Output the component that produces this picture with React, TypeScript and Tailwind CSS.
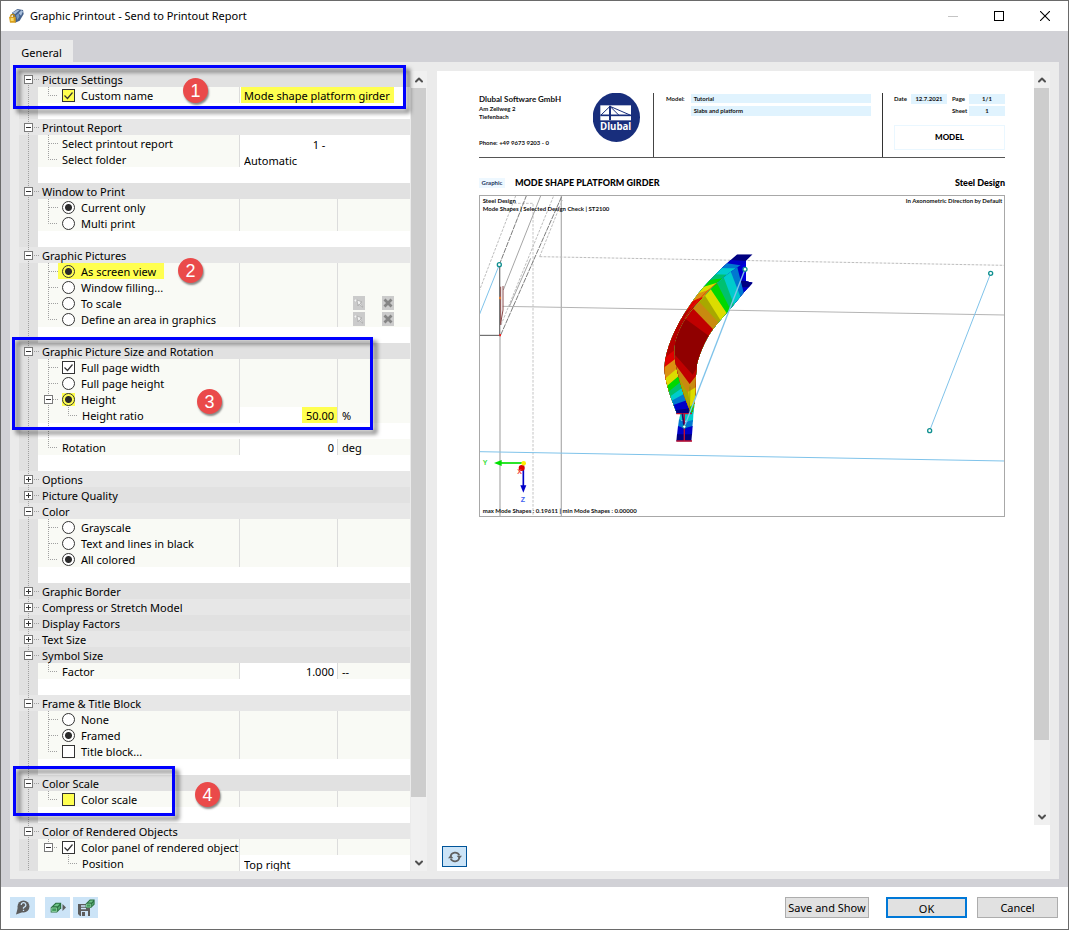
import React from 'react';
import { ChevronDown, ChevronUp } from 'lucide-react';

type Row = {
  label?: string;
  control?: 'checkbox' | 'radio';
  checked?: boolean;
  mark?: 'row' | 'control';
  nested?: boolean;
  expander?: boolean;
  last?: boolean;
  value?: string;
  kind?: 'input' | 'select';
  align?: 'left' | 'right' | 'center';
  markValue?: boolean;
  unit?: string;
  wide?: boolean;
  tools?: boolean;
  gap?: 'plain' | 'line';
};

type Section = { title: string; open?: boolean; rows: Row[] };

const sections: Section[] = [
  {
    title: 'Picture Settings',
    open: true,
    rows: [
      { label: 'Custom name', control: 'checkbox', checked: true, mark: 'control', last: true, kind: 'input', value: 'Mode shape platform girder', wide: true, markValue: true },
      { gap: 'plain' },
    ],
  },
  {
    title: 'Printout Report',
    open: true,
    rows: [
      { label: 'Select printout report', kind: 'select', value: '1 -', align: 'center', wide: true },
      { label: 'Select folder', last: true, kind: 'select', value: 'Automatic', wide: true },
      { gap: 'plain' },
    ],
  },
  {
    title: 'Window to Print',
    open: true,
    rows: [
      { label: 'Current only', control: 'radio', checked: true },
      { label: 'Multi print', control: 'radio', last: true },
      { gap: 'plain' },
    ],
  },
  {
    title: 'Graphic Pictures',
    open: true,
    rows: [
      { label: 'As screen view', control: 'radio', checked: true, mark: 'row' },
      { label: 'Window filling...', control: 'radio' },
      { label: 'To scale', control: 'radio', tools: true },
      { label: 'Define an area in graphics', control: 'radio', tools: true, last: true },
      { gap: 'plain' },
    ],
  },
  {
    title: 'Graphic Picture Size and Rotation',
    open: true,
    rows: [
      { label: 'Full page width', control: 'checkbox', checked: true },
      { label: 'Full page height', control: 'radio' },
      { label: 'Height', control: 'radio', checked: true, mark: 'control', expander: true },
      { label: 'Height ratio', nested: true, kind: 'input', value: '50.00', align: 'right', markValue: true, unit: '%' },
      { gap: 'line' },
      { label: 'Rotation', last: true, kind: 'input', value: '0', align: 'right', unit: 'deg' },
      { gap: 'plain' },
    ],
  },
  { title: 'Options', rows: [] },
  { title: 'Picture Quality', rows: [] },
  {
    title: 'Color',
    open: true,
    rows: [
      { label: 'Grayscale', control: 'radio' },
      { label: 'Text and lines in black', control: 'radio' },
      { label: 'All colored', control: 'radio', checked: true, last: true },
      { gap: 'plain' },
    ],
  },
  { title: 'Graphic Border', rows: [] },
  { title: 'Compress or Stretch Model', rows: [] },
  { title: 'Display Factors', rows: [] },
  { title: 'Text Size', rows: [] },
  {
    title: 'Symbol Size',
    open: true,
    rows: [
      { label: 'Factor', last: true, kind: 'input', value: '1.000', align: 'right', unit: '--' },
      { gap: 'plain' },
    ],
  },
  {
    title: 'Frame & Title Block',
    open: true,
    rows: [
      { label: 'None', control: 'radio' },
      { label: 'Framed', control: 'radio', checked: true },
      { label: 'Title block...', control: 'checkbox', last: true },
      { gap: 'plain' },
    ],
  },
  {
    title: 'Color Scale',
    open: true,
    rows: [
      { label: 'Color scale', control: 'checkbox', mark: 'control', last: true },
      { gap: 'plain' },
    ],
  },
  {
    title: 'Color of Rendered Objects',
    open: true,
    rows: [
      { label: 'Color panel of rendered object', control: 'checkbox', checked: true, expander: true, last: true },
      { label: 'Position', nested: true, last: true, kind: 'select', value: 'Top right', wide: true },
    ],
  },
];

const Dots = ({ d }: { d: string }) => (
  <path d={d} stroke="#a0a0a0" strokeDasharray="1 1" fill="none" />
);

const ExpanderBox = ({ x, open }: { x: number; open?: boolean }) => (
  <g>
    <rect x={x + 0.5} y="4.5" width="8" height="8" fill="#fff" stroke="#7a7a7a" />
    <path d={`M${x + 2} 8.5h5`} stroke="#333" />
    {!open && <path d={`M${x + 4.5} 6v5`} stroke="#333" />}
  </g>
);

const CheckInput = ({ row, id, group }: { row: Row; id: string; group: string }) => (
  <span className={`relative flex shrink-0 ${row.mark === 'control' && row.control === 'radio' ? 'bg-[#ffff50]' : ''}`}>
    {row.control === 'radio' ? (
      <input
        id={id}
        type="radio"
        name={group}
        defaultChecked={row.checked}
        className={`size-[13px] appearance-none rounded-full border border-[#333] checked:bg-[radial-gradient(circle,#2b2b2b_0_3px,transparent_4px)] ${row.mark ? 'bg-[#ffff50]' : 'bg-white'}`}
      />
    ) : (
      <input
        id={id}
        type="checkbox"
        defaultChecked={row.checked}
        className={`peer size-[13px] appearance-none border border-[#333] ${row.mark ? 'bg-[#ffff50]' : 'bg-white'}`}
      />
    )}
    {row.control === 'checkbox' && (
      <svg viewBox="0 0 13 13" className="pointer-events-none absolute inset-0 hidden size-[13px] peer-checked:block">
        <path d="M2.5 6.5l3 3 5-6" fill="none" stroke="#333" strokeWidth="1.2" />
      </svg>
    )}
  </span>
);

const Tools = ({ label }: { label: string }) => (
  <div className="flex gap-[17px] pl-[15px]">
    <button aria-label={`Pick: ${label}`} className="h-[14px] w-3 bg-[#cbcbcb]">
      <svg viewBox="0 0 12 14" className="block">
        <path d="M1.5 4.5h2M2.500 3.500v2" stroke="#f4f4f4" fill="none" />
        <path d="M4 4l5 2-2 1 3 4h-1L6 8 5 10z" fill="#f1f1f1" stroke="#a0a0a0" strokeWidth="0.6" />
      </svg>
    </button>
    <button aria-label={`Clear: ${label}`} className="h-[14px] w-3 bg-[#cbcbcb]">
      <svg viewBox="0 0 12 14" className="block">
        <path d="M2.5 3.500l7 7M9.500 3.500l-7 7" stroke="#858585" strokeWidth="2.800" />
      </svg>
    </button>
  </div>
);

const alignClass = { left: 'text-left', right: 'text-right', center: 'text-center' };

const TreeRow = ({ row, id, group, end }: { row: Row; id: string; group: string; end: boolean }) => {
  const gutter = (
    <svg className="h-4 w-[19px] shrink-0 bg-[#e1e1e1]" viewBox="0 0 19 16">
      <Dots d="M9.500 0v16" />
    </svg>
  );

  if (row.gap) {
    return (
      <div className="flex h-4 bg-white">
        {gutter}
        {row.gap === 'line' && (
          <svg className="h-4 w-5" viewBox="0 0 20 16"><Dots d="M10.500 0v16" /></svg>
        )}
      </div>
    );
  }

  const guide = row.nested ? (
    <svg className="h-4 w-10 shrink-0" viewBox="0 0 40 16">
      {!end && <Dots d="M10.500 0v16" />}
      <Dots d="M30.500 0v8.500h10" />
    </svg>
  ) : (
    <svg className="h-4 w-5 shrink-0" viewBox="0 0 20 16">
      <Dots d={row.last ? 'M10.500 0v8.500h10' : 'M10.500 0v16'} />
      {!row.last && <Dots d="M11 8.500h9" />}
      {row.expander && <ExpanderBox x={6} open />}
    </svg>
  );

  const valueBg = row.value ? 'bg-white' : '';
  const valuePad = row.align === 'center' ? 'pl-1' : row.markValue ? 'pl-px' : '';
  const fieldPad = row.align === 'right' ? 'pr-[3px]' : row.markValue ? 'px-[3px]' : 'px-1';
  const fieldClass = `h-4 w-full appearance-none pt-0.5 outline-none ${fieldPad} ${alignClass[row.align ?? 'left']}`;

  return (
    <div className="flex h-4 bg-[#f9faf5]">
      {gutter}
      <div className="flex w-[202px] shrink-0 overflow-hidden border-r border-[#dcdcdc]">
        {row.expander ? <button aria-label={`Collapse ${row.label}`}>{guide}</button> : guide}
        <label
          htmlFor={id}
          className={`flex items-center gap-[6px] px-1 whitespace-nowrap ${row.mark === 'row' ? 'bg-[#ffff50] pr-2' : ''}`}
        >
          {row.control && <CheckInput row={row} id={id} group={group} />}
          <span className="pt-0.5">{row.label}</span>
        </label>
      </div>
      <div className={`flex ${row.wide ? 'flex-1 pr-4' : 'w-[98px] justify-end border-r border-[#dcdcdc]'} ${valueBg} ${valuePad}`}>
        {row.kind === 'input' && (
          <input
            id={id}
            aria-label={row.label}
            defaultValue={row.value}
            className={`${fieldClass} ${row.markValue ? 'bg-[#ffff50]' : ''} ${row.markValue && !row.wide ? 'max-w-[35px]' : ''}`}
          />
        )}
        {row.kind === 'select' && (
          <select id={id} className={fieldClass}>
            <option>{row.value}</option>
          </select>
        )}
      </div>
      {!row.wide && (
        <div className="flex flex-1 items-center">
          {row.unit && <span className="pt-0.5 pl-1">{row.unit}</span>}
          {row.tools && <Tools label={row.label ?? ''} />}
        </div>
      )}
    </div>
  );
};

const SettingsTree = () => (
  <div className="w-[391px] bg-white text-[11px] leading-4">
    {sections.map((section, i) => (
      <div key={section.title}>
        <div className={`flex h-4 ${i % 2 ? 'bg-[#e7e7e7]' : 'bg-[#e1e1e1]'}`}>
          <button aria-label={`Toggle ${section.title}`} className="w-[23px] shrink-0">
            <svg className="block h-4 w-[23px]" viewBox="0 0 23 16">
              <Dots d={i === 0 ? 'M9.500 8v8' : 'M9.500 0v16'} />
              <Dots d="M15 8.500h6" />
              <ExpanderBox x={5} open={section.open} />
            </svg>
          </button>
          <span className="leading-[18px]">{section.title}</span>
        </div>
        {section.rows.map((row, j) => (
          <TreeRow
            key={j}
            row={row}
            id={`opt-${i}-${j}`}
            group={`group-${i}`}
            end={j === section.rows.length - 1}
          />
        ))}
      </div>
    ))}
  </div>
);

const ScrollBar = ({ thumb }: { thumb: string }) => (
  <div className="flex w-4 shrink-0 flex-col bg-[#f0f0f0]">
    <button aria-label="Scroll up" className="flex h-[17px] items-center justify-center text-[#505050]">
      <ChevronUp size={12} strokeWidth={4} />
    </button>
    <div className={`w-[15px] bg-[#cdcdcd] ${thumb}`} />
    <div className="flex-1" />
    <button aria-label="Scroll down" className="flex h-[17px] items-center justify-center text-[#505050]">
      <ChevronDown size={12} strokeWidth={4} />
    </button>
  </div>
);

// Each band fills everything below the line x1,y1 - x2,y2; later bands cover earlier ones
type Band = [string, number, number, number, number];

const flangeBands: Band[] = [
  ['#0000c8', 274, 60, 318, 63],
  ['#0078d0', 262, 70, 304, 76],
  ['#00cccc', 244, 84, 292, 85],
  ['#00c070', 225, 103, 262, 104],
  ['#00d800', 207, 120, 240, 116],
  ['#dcdc00', 192, 140, 226, 130],
  ['#dc9010', 176, 160, 204, 150],
  ['#e00000', 156, 184, 180, 174],
  ['#b40000', 140, 212, 160, 200],
  ['#e00000', 76, 352, 104, 330],
  ['#dc9010', 73, 382, 104, 358],
  ['#dcdc00', 77, 414, 108, 388],
  ['#00d800', 81, 438, 114, 410],
  ['#00c070', 87, 454, 119, 428],
  ['#00cccc', 92, 468, 126, 444],
  ['#0078d0', 97, 481, 132, 462],
  ['#0000c8', 102, 494, 140, 481],
  ['#000080', 109, 510, 152, 505],
];

const webBands: Band[] = [
  ['#0078d0', 292, 82, 308, 146],
  ['#00cccc', 273, 97, 298, 162],
  ['#00c070', 251, 112, 281, 192],
  ['#00d800', 231, 129, 270, 206],
  ['#dcdc00', 213, 149, 257, 215],
  ['#a8a800', 195, 167, 240, 238],
  ['#c88a10', 177, 185, 234, 246],
  ['#c00000', 159, 205, 216, 264],
  ['#900000', 136, 236, 204, 286],
];

const bandPoints = ([, x1, y1, x2, y2]: Band, reach: number) => {
  const dx = (x2 - x1) * reach;
  const dy = (y2 - y1) * reach;
  return `0,${y1 - dy} ${x1 - dx},${y1 - dy} ${x2 + dx},${y2 + dy} ${x2 + dx},620 0,620`;
};

const Girder = () => (
  <g transform="translate(483 135)">
    <clipPath id="girder-body">
      <path d="M292 43H338L318 62V124L338 128 312 157 270 208 236 246C200 287 180 335 171 372C166 410 168 450 164 485L155 521H111C95 480 75 430 73 385C75 330 105 260 150 195C180 150 230 95 292 43Z" />
    </clipPath>
    <clipPath id="girder-web">
      <path d="M318 66C285 84 230 125 195 167C150 212 122 250 106 305C100 345 106 370 116 410C126 450 140 490 155 521H400V66Z" />
    </clipPath>
    <polygon points="122,521 166,470 163,500 158,530 119,535" fill="#00d070" />
    <polygon points="121,521 161,506 159,545 117,540" fill="#00cccc" />
    <polygon points="117,538 133,546 159,540 157,562 133,566 114,560" fill="#0078d0" />
    <polygon points="114,558 133,565 158,558 156,585 111,585" fill="#0000c8" />
    <polygon points="111,583 156,583 154,604 109,604" fill="#000080" />
    <g clipPath="url(#girder-body)">
      <path d="M0 0h400v620H0z" fill="#000080" />
      {flangeBands.map((band, i) => (
        <polygon key={i} points={bandPoints(band, 0.3)} fill={band[0]} />
      ))}
      <g clipPath="url(#girder-web)">
        <path d="M0 0h400v620H0z" fill="#0000c8" />
        <path d="M318 66l-14 12 8 60 6 0z" fill="#0000e0" />
        <path d="M300 122h50v20h-45z" fill="#000080" />
        {webBands.map((band, i) => (
          <polygon key={i} points={bandPoints(band, 0.3)} fill={band[0]} />
        ))}
        <path d="M90 328L158 404 190 350V620H90z" fill="#c00000" />
        <path d="M90 352L149 432 190 380V620H90z" fill="#c88a10" />
        <path d="M110 400L146 464 149 432V520H110z" fill="#a8a800" />
        <path d="M145 455L190 428V520L150 500z" fill="#dcdc00" />
        <path d="M150 500L190 470V540H150z" fill="#00d800" />
      </g>
      <path d="M230 130C190 160 150 205 134 236" stroke="#c83c00" strokeWidth="2" fill="none" />
      <path d="M150 440L148 520" stroke="#8a8a00" strokeWidth="2" />
    </g>
    <path d="M109 521h46M109 603h47M133 521v82" stroke="#c01030" strokeWidth="4" />
    <path d="M127 521l5 35" stroke="#300060" strokeWidth="5" />
    <path d="M315 88L133 560" stroke="#7fc3ea" strokeWidth="4" />
    <circle cx="315" cy="88" r="6" fill="#fff" stroke="#109090" strokeWidth="4" />
    <circle cx="133" cy="560" r="5" fill="#fff" stroke="#109090" strokeWidth="3" />
  </g>
);

const GirderView = () => (
  <svg viewBox="0 0 1578 966" className="block w-full bg-white outline outline-[#a8a8a8] -outline-offset-1" role="img" aria-label="Mode shape of the platform girder">
    <g transform="translate(-27 -45)" fill="none" strokeWidth="3">
      <path d="M90 465V1011M274 45v966" stroke="#b4b4b4" strokeWidth="4" />
      <path d="M189 72V1011M120 70h70" stroke="#c4c4c4" strokeDasharray="8 4" />
      <path d="M98 379L1605 405" stroke="#b4b4b4" />
      <path d="M209 230L1605 256M209 230L277 60M27 335L138 45M93 435L252 45" stroke="#bdbdbd" strokeDasharray="8 4" />
      <path d="M88 254L170 45M92 465L277 45" stroke="#7c7c7c" strokeDasharray="16 3" />
      <path d="M100 330L213 45M118 380L182 235" stroke="#a5a5a5" />
      <path d="M27 466h64" stroke="#555" />
      <path d="M89 254V465" stroke="#777" strokeWidth="4" />
      <path d="M92 320v115M99 318v72l-7 40" stroke="#8a4a4a" />
      <path d="M90 350v8" stroke="#f08030" strokeWidth="5" />
      <path d="M88 462h5v7h-5z" fill="#e22" />
      <path d="M27 815L1605 843M27 407L88 254M1562 280L1379 752" stroke="#7fc3ea" />
      <g fill="#fff" stroke="#109090" strokeWidth="4">
        <circle cx="88" cy="254" r="6" />
        <circle cx="1562" cy="280" r="6" />
        <circle cx="1379" cy="752" r="6" />
      </g>
    </g>
    <Girder />
    <g transform="translate(-27 -45)">
      <path d="M90 849h70" stroke="#00e000" strokeWidth="5" />
      <path d="M72 849l23-9v18z" fill="#00e000" />
      <path d="M160 855v65" stroke="#0000c8" strokeWidth="5" />
      <path d="M160 938l-9-22h18z" fill="#0000c8" />
      <circle cx="155" cy="864" r="9" fill="#e00000" />
      <circle cx="161" cy="850" r="7" fill="#ffee00" />
      <g fontFamily="Liberation Sans, sans-serif" fontSize="21">
        <text x="38" y="855" fill="#40e040">Y</text>
        <text x="142" y="883" fill="#f04040">X</text>
        <text x="152" y="965" fill="#4060f0">Z</text>
      </g>
      <g fontFamily="Lato, sans-serif" fontSize="18" fontWeight="700" fill="#111">
        <text x="38" y="69">Steel Design</text>
        <text x="38" y="92">Mode Shapes | Selected Design Check | ST2100</text>
        <text x="38" y="998">max Mode Shapes : 0.19611 | min Mode Shapes : 0.00000</text>
        <text x="1597" y="69" textAnchor="end">In Axonometric Direction by Default</text>
      </g>
    </g>
  </svg>
);

const DlubalLogo = () => (
  <svg viewBox="0 0 141 147" className="h-[49px] w-[47px] shrink-0">
    <ellipse cx="70" cy="73" rx="71" ry="74" fill="#182e7c" />
    <rect x="22" y="37" width="92" height="45" fill="#fff" />
    <path d="M22 67h92" stroke="#182e7c" strokeWidth="5" />
    <path d="M51 38v44" stroke="#182e7c" strokeWidth="6" />
    <path d="M51 40L24 66M51 40l26 26M51 40l60 26" stroke="#182e7c" strokeWidth="3" />
    <text x="68" y="111" textAnchor="middle" fontFamily="Open Sans, sans-serif" fontWeight="700" fontSize="29" fill="#fff">Dlubal</text>
  </svg>
);

const Report = () => (
  <article className="flex-1 pt-[22px] pr-[29px] pl-[42px] font-['Lato',sans-serif] text-[6px] leading-[8px] font-bold text-[#111]">
    <header className="flex h-[65px] border-b border-[#555]">
      <div className="flex w-[175px] justify-between border-r border-[#444] pr-[13px]">
        <address className="not-italic">
          <p className="text-[8px] leading-[12px]">Dlubal Software GmbH</p>
          <p>Am Zellweg 2</p>
          <p>Tiefenbach</p>
          <p className="pt-[18px]">Phone: +49 9673 9203 - 0</p>
        </address>
        <DlubalLogo />
      </div>
      <div className="flex flex-1 gap-[6px] border-r border-[#333] pt-px pr-[11px] pl-3">
        <span className="leading-[10px]">Model:</span>
        <div className="flex flex-1 flex-col gap-[3px]">
          <span className="bg-[#e0f3fe] px-[3px] leading-[9px]">Tutorial</span>
          <span className="bg-[#e0f3fe] px-[3px] leading-[10px]">Slabs and platform</span>
        </div>
      </div>
      <div className="flex w-[122px] flex-col gap-[2px] pt-px pl-[11px] leading-[10px]">
        <div className="flex">
          <span className="w-[17px]">Date</span>
          <span className="w-[36px] bg-[#e0f3fe] text-center">12.7.2021</span>
          <span className="flex-1 pl-[5px]">Page</span>
          <span className="w-9 bg-[#e0f3fe] text-center">1/1</span>
        </div>
        <div className="flex">
          <span className="flex-1 pl-[58px]">Sheet</span>
          <span className="w-9 bg-[#e0f3fe] text-center">1</span>
        </div>
        <div className="mt-[7px] border border-[#eaf7ff] text-center text-[8px] leading-[23px] font-black text-black">MODEL</div>
      </div>
    </header>
    <div className="mt-[18px] mb-[5px] flex items-center">
      <span className="w-[26px] bg-[#eef8ff] text-center leading-[10px] text-[#1d3560]">Graphic</span>
      <h2 className="flex-1 pl-[10px] text-[9px] leading-[14px] font-black text-black">MODE SHAPE PLATFORM GIRDER</h2>
      <span className="text-[9px] leading-[14px] font-black text-black">Steel Design</span>
    </div>
    <GirderView />
  </article>
);

const Cube = () => (
  <g>
    <path d="M1 8l7-7h8v8l-6 6H1z" fill="#2a7040" />
    <path d="M2.500 8.500h7v5h-7z" fill="#3f9a5a" stroke="#9ad8ab" strokeWidth="1.200" />
    <path d="M5 6l4-3.500h5L11 6z" fill="#6fc488" />
    <path d="M11.500 8l3-3v3.500l-3 3z" fill="#52a86c" />
  </g>
);

const Frame = ({ className }: { className: string }) => (
  <div className={`pointer-events-none absolute border-3 border-[#0000ff] drop-shadow-[4px_4px_2px_rgba(0,0,0,0.55)] ${className}`} />
);

const Bullet = ({ n, className }: { n: number; className: string }) => (
  <div className={`pointer-events-none absolute flex size-[25px] items-center justify-center rounded-full bg-[#ea4a4a] font-['Liberation_Sans',sans-serif] text-lg text-white shadow-[1px_2px_2px_rgba(0,0,0,0.45)] ${className}`}>
    {n}
  </div>
);

const App: React.FC = () => {
  return (
    <div className="flex min-h-screen flex-col border border-[#6a6a6a] bg-white font-['Noto_Sans','Open_Sans',sans-serif] text-[11px] text-black">
      <header className="flex h-[30px] items-center">
        <svg viewBox="0 0 48 48" className="ml-[7px] size-4">
          <path d="M12 14L28 3l17 3 2 12-12 20-14 6z" fill="#44618c" />
          <path d="M14 14l14-9 6 2-13 12zM32 16l8-9 5 3-6 13z" fill="#a8bfdc" />
          <path d="M24 22l8-6 2 10-6 10z" fill="#7796bf" />
          <path d="M3 26h20v18H6z" fill="#d99f1c" />
          <path d="M8 26c0-9 11-9 11 0" fill="none" stroke="#c08a10" strokeWidth="4" />
          <path d="M8 30h9v9H8z" fill="#f7d968" />
        </svg>
        <h1 className="flex-1 pl-[6px]">Graphic Printout - Send to Printout Report</h1>
        <button aria-label="Minimize" className="flex w-[46px] justify-center">
          <svg width="10" height="10"><path d="M0 5.500h10" stroke="#c4c4c4" /></svg>
        </button>
        <button aria-label="Maximize" className="flex w-[46px] justify-center">
          <svg width="10" height="10"><rect x="0.5" y="0.5" width="9" height="9" fill="none" stroke="#000" /></svg>
        </button>
        <button aria-label="Close" className="flex w-[46px] justify-center">
          <svg width="10" height="10"><path d="M0 0l10 10M10 0L0 10" stroke="#000" strokeWidth="1.100" /></svg>
        </button>
      </header>

      <main className="relative flex-1 bg-[#d1d1d6] px-[9px] pt-[9px] pb-2">
        <button className="block h-[22px] w-[63px] bg-[#ebebeb] pt-1">General</button>
        <div className="flex bg-[#ebebeb] p-[9px] pb-2">
          <SettingsTree />
          <div className="ml-px flex">
            <ScrollBar thumb="h-[709px]" />
          </div>
          <section className="ml-[10px] flex flex-1 flex-col bg-white">
            <div className="flex h-[754px]">
              <Report />
              <ScrollBar thumb="h-[652px]" />
            </div>
            <div className="px-[5px] pt-[21px]">
              <button aria-label="Refresh" className="flex h-[21px] w-[25px] items-center justify-center border border-[#005499] bg-[#cce4f7]">
                <svg viewBox="0 0 42 36" className="h-3 w-[14px]">
                  <path d="M8 15C11 3 28 1 34 13M34 21C31 33 14 35 8 23" fill="none" stroke="#606060" strokeWidth="5" />
                  <path d="M26 14h16l-8 10zM0 22h16L8 12z" fill="#606060" />
                </svg>
              </button>
            </div>
          </section>
        </div>

        {/* callouts over the settings tree */}
        <Frame className="top-[34px] left-3 h-11 w-[393px]" />
        <Frame className="top-[306px] left-[11px] h-[93px] w-[361px]" />
        <Frame className="top-[735px] left-3 h-[50px] w-[162px]" />
        <Bullet n={1} className="top-[47px] left-[182px]" />
        <Bullet n={2} className="top-[227px] left-[177px]" />
        <Bullet n={3} className="top-[358px] left-[196px]" />
        <Bullet n={4} className="top-[751px] left-[194px]" />
      </main>

      <footer className="flex h-[42px] items-center px-[9px] pb-px">
        <button aria-label="Help" className="flex h-[21px] w-[25px] items-center justify-center bg-[#cce4f7]">
          <svg viewBox="0 0 15 15" className="size-[15px]">
            <circle cx="8.500" cy="6.500" r="6" fill="#5d5d5d" />
            <path d="M3 7L1 14.500 8 12z" fill="#5d5d5d" />
            <path d="M6.200 5a2.300 2.300 0 1 1 3.300 2l-1 .8v1M8.500 9.700v1.300" fill="none" stroke="#cce4f7" strokeWidth="1.300" />
          </svg>
        </button>
        <button aria-label="Load settings" className="ml-[10px] flex h-[21px] w-[25px] items-center justify-center bg-[#cce4f7]">
          <svg viewBox="0 0 16 12" className="h-3 w-4">
            <g transform="scale(0.700)"><Cube /></g>
            <path d="M12.500 2v7l3.500-3.500z" fill="#5d5d5d" />
          </svg>
        </button>
        <button aria-label="Save settings" className="ml-[3px] flex h-[21px] w-[25px] items-center justify-center bg-[#cce4f7]">
          <svg viewBox="0 0 18 18" className="size-[18px]">
            <path d="M1 5h12v12H3l-2-2z" fill="#5d5d5d" />
            <path d="M4 7h5M4 9.500h5" stroke="#cce4f7" strokeWidth="1.500" />
            <path d="M4 12h7v5H4z" fill="#cce4f7" />
            <path d="M5 13h3v4H5z" fill="#5d5d5d" />
            <g transform="translate(8 0) scale(0.600)"><Cube /></g>
          </svg>
        </button>
        <div className="flex-1" />
        <button className="h-[21px] w-[84px] border border-[#adadad] bg-[#e1e1e1] pt-0.5 whitespace-nowrap">Save and Show</button>
        <button className="ml-[17px] h-[21px] w-[81px] border-2 border-[#0078d7] bg-[#e1e1e1] pt-0.5">OK</button>
        <button className="mr-px ml-[10px] h-[21px] w-[81px] border border-[#adadad] bg-[#e1e1e1] pt-0.5">Cancel</button>
      </footer>
    </div>
  );
};

export default App;
